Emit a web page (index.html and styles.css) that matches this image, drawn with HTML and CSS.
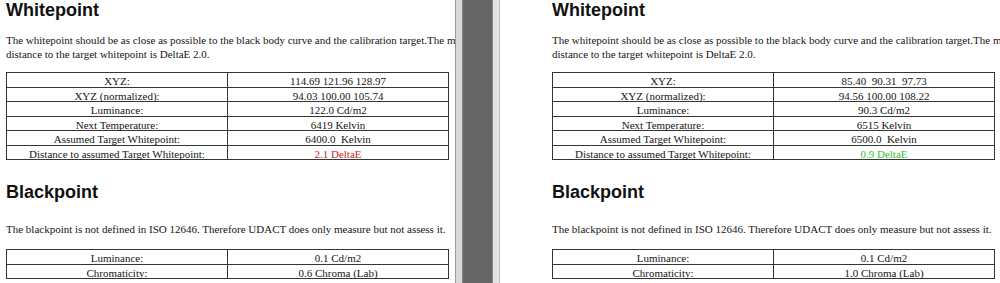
FILE: index.html
```html
<!DOCTYPE html>
<html lang="en">
<head>
<meta charset="utf-8">
<title>UDACT report</title>
<link rel="stylesheet" href="styles.css">
</head>
<body>
<div class="screen">
  <div class="pane pane-left">
    <h2 class="title">Whitepoint</h2>
    <p class="text">The whitepoint should be as close as possible to the black body curve and the calibration target.The maximum<br>distance to the target whitepoint is DeltaE 2.0.</p>
    <table class="data">
      <tr><td>XYZ:</td><td>114.69 121.96 128.97</td></tr>
      <tr><td>XYZ (normalized):</td><td>94.03 100.00 105.74</td></tr>
      <tr><td>Luminance:</td><td>122.0 Cd/m2</td></tr>
      <tr><td>Next Temperature:</td><td>6419 Kelvin</td></tr>
      <tr><td>Assumed Target Whitepoint:</td><td>6400.0&nbsp; Kelvin</td></tr>
      <tr><td>Distance to assumed Target Whitepoint:</td><td class="bad">2.1 DeltaE</td></tr>
    </table>
    <h2 class="title title-second">Blackpoint</h2>
    <p class="text text-second">The blackpoint is not defined in ISO 12646. Therefore UDACT does only measure but not assess it.</p>
    <table class="data data-second">
      <tr><td>Luminance:</td><td>0.1 Cd/m2</td></tr>
      <tr><td>Chromaticity:</td><td>0.6 Chroma (Lab)</td></tr>
    </table>
  </div>
  <div class="divider"></div>
  <div class="pane pane-right">
    <h2 class="title">Whitepoint</h2>
    <p class="text">The whitepoint should be as close as possible to the black body curve and the calibration target.The maximum<br>distance to the target whitepoint is DeltaE 2.0.</p>
    <table class="data">
      <tr><td>XYZ:</td><td>85.40&nbsp; 90.31&nbsp; 97.73</td></tr>
      <tr><td>XYZ (normalized):</td><td>94.56 100.00 108.22</td></tr>
      <tr><td>Luminance:</td><td>90.3 Cd/m2</td></tr>
      <tr><td>Next Temperature:</td><td>6515 Kelvin</td></tr>
      <tr><td>Assumed Target Whitepoint:</td><td>6500.0&nbsp; Kelvin</td></tr>
      <tr><td>Distance to assumed Target Whitepoint:</td><td class="good">0.9 DeltaE</td></tr>
    </table>
    <h2 class="title title-second">Blackpoint</h2>
    <p class="text text-second">The blackpoint is not defined in ISO 12646. Therefore UDACT does only measure but not assess it.</p>
    <table class="data data-second">
      <tr><td>Luminance:</td><td>0.1 Cd/m2</td></tr>
      <tr><td>Chromaticity:</td><td>1.0 Chroma (Lab)</td></tr>
    </table>
  </div>
</div>
</body>
</html>
```
FILE: styles.css
```css
html, body {
  margin: 0;
  padding: 0;
  height: 100%;
  overflow: hidden;
  background: #ffffff;
}

.screen {
  display: flex;
  width: 1000px;
  height: 283px;
}

.pane {
  overflow: hidden;
  background: #ffffff;
  color: #141414;
}

.pane-left {
  width: 455px;
  flex: 0 0 455px;
  padding-left: 6px;
  box-sizing: border-box;
}

.pane-right {
  width: 500px;
  flex: 0 0 500px;
  padding-left: 52px;
  box-sizing: border-box;
}

.divider {
  flex: 0 0 45px;
  height: 283px;
  background: linear-gradient(to right,
    #9a9a9a 0 1px,
    #d8d8d8 1px 7px,
    #858585 7px 8px,
    #666666 8px 37px,
    #8a8a8a 37px 38px,
    #e2e2e2 38px 44px,
    #bdbdbd 44px 45px);
}

.title {
  margin: 0;
  font-family: "Liberation Sans", Arial, sans-serif;
  font-weight: bold;
  font-size: 18px;
  line-height: 21px;
  color: #111111;
  white-space: nowrap;
}

.title-second {
  margin-top: 22px;
}

.text {
  margin: 12px 0 0;
  font-family: "Liberation Serif", "Times New Roman", serif;
  font-size: 11px;
  line-height: 14px;
  white-space: nowrap;
  color: #151515;
}

.text-second {
  margin-top: 19px;
}

.data {
  margin-top: 11px;
  width: 443px;
  border-collapse: collapse;
  table-layout: fixed;
  font-family: "Liberation Serif", "Times New Roman", serif;
  font-size: 11px;
  color: #151515;
}

.data-second {
  margin-top: 13px;
}

.data td {
  width: 50%;
  border: 1px solid #353535;
  padding: 4px 0 0;
  height: 9.5px;
  line-height: 9.5px;
  text-align: center;
  white-space: nowrap;
  overflow: visible;
}

.data .bad {
  color: #c81e1e;
}

.data .good {
  color: #2fc42f;
}
```
